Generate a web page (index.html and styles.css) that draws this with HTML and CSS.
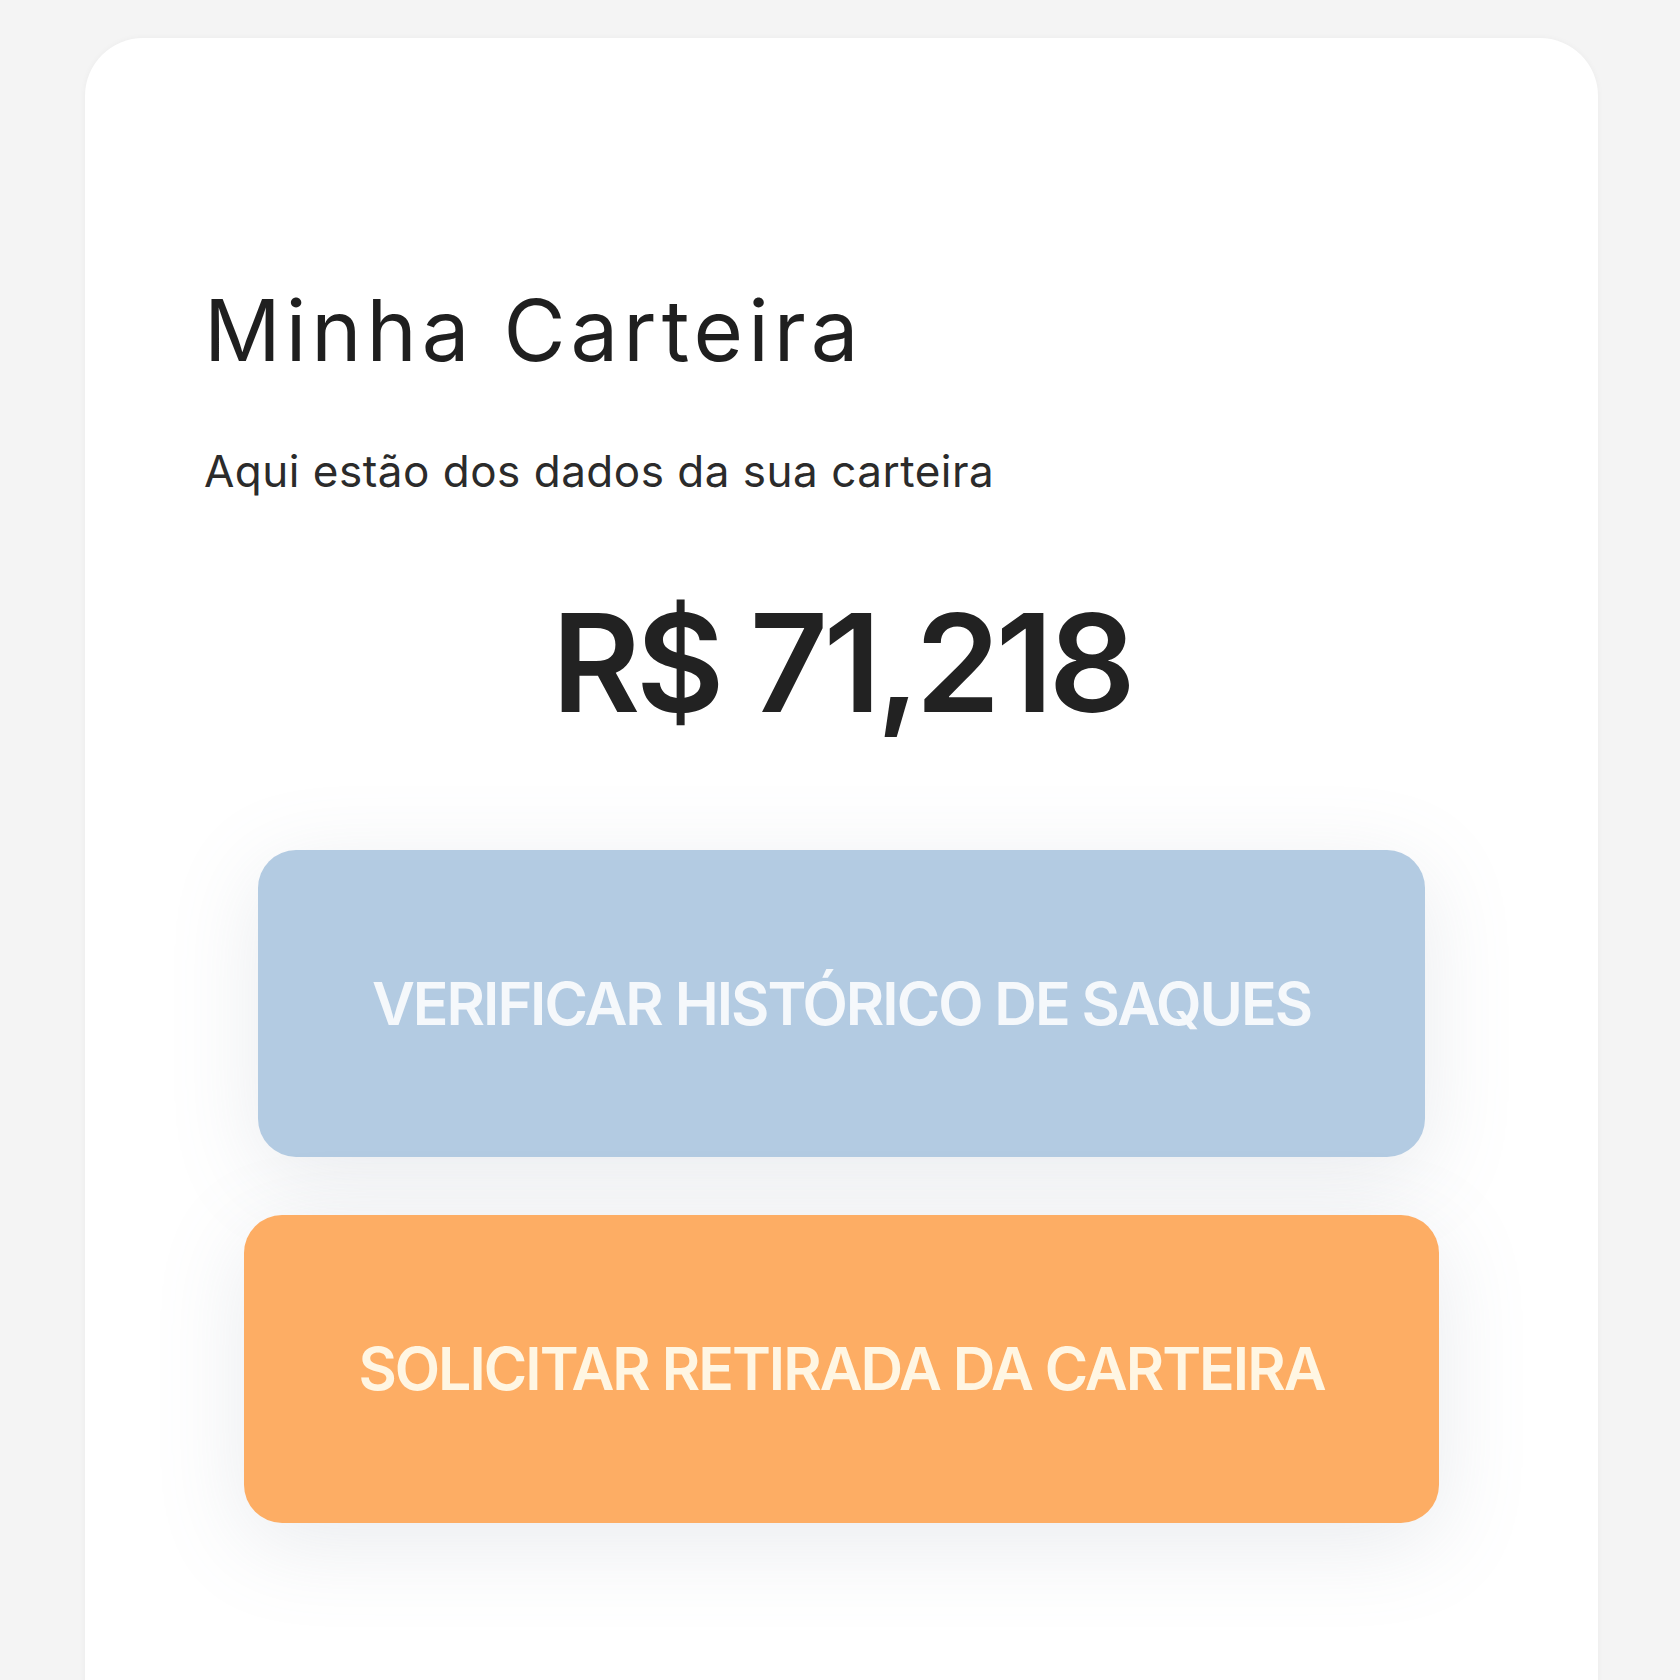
FILE: index.html
```html
<!DOCTYPE html>
<html>
<head>
    <meta name="viewport" content="width=device-width, initial-scale=1.0">

    <title>Minha Carteira</title>

    <link rel="stylesheet" href="styles.css">
</head>
<body>
    <div class="card">
        <h1>Minha Carteira</h1>
        <p class="subtitle">Aqui estão dos dados da sua carteira</p>

        <div class="balance">R$ 71,218</div>

        <div class="actions">
            <button class="btn btn-history">VERIFICAR HISTÓRICO DE SAQUES</button>
            <button class="btn btn-withdraw">SOLICITAR RETIRADA DA CARTEIRA</button>
        </div>
    </div>
</body>
</html>
```

FILE: styles.css
```css
html,
body {
    margin: 0;
    background: #f4f4f4;
    font-family: Inter, "Noto Sans", sans-serif;
    -webkit-font-smoothing: antialiased;
}

body {
    padding-top: 38px;
    height: 1642px;
    overflow: hidden;
}

.card {
    box-sizing: border-box;
    width: 1513px;
    height: 1700px;
    margin-left: 85px;
    padding: 242px 119px 0;
    background: #fff;
    border-radius: 58px 58px 0 0;
    box-shadow: 0 0 6px rgba(0, 0, 0, 0.04);
    display: flex;
    flex-direction: column;
}

h1 {
    margin: 0;
    font-size: 85px;
    font-weight: 400;
    line-height: 1.2;
    letter-spacing: 5px;
    color: #1f1f1f;
}

.subtitle {
    margin: 63px 0 0;
    font-size: 44px;
    line-height: 1.2;
    letter-spacing: 0.5px;
    color: #2b2b2b;
}

.balance {
    margin-top: 83px;
    font-size: 136px;
    font-weight: 600;
    line-height: 1.2;
    letter-spacing: -4.5px;
    text-align: center;
    color: #222;
}

.actions {
    margin-top: 106px;
    display: flex;
    flex-direction: column;
    align-items: center;
    gap: 58px;
}

.btn {
    border: none;
    border-radius: 38px;
    font-family: inherit;
    font-size: 59px;
    font-weight: 600;
    letter-spacing: -2px;
    cursor: pointer;
    box-shadow: 0 20px 90px rgba(120, 130, 150, 0.16);
}

.btn-history {
    width: 1167px;
    height: 307px;
    background: #b3cbe2;
    color: #f5f8fb;
}

.btn-withdraw {
    width: 1195px;
    height: 308px;
    background: #fdad64;
    color: #fff6e3;
}
```
